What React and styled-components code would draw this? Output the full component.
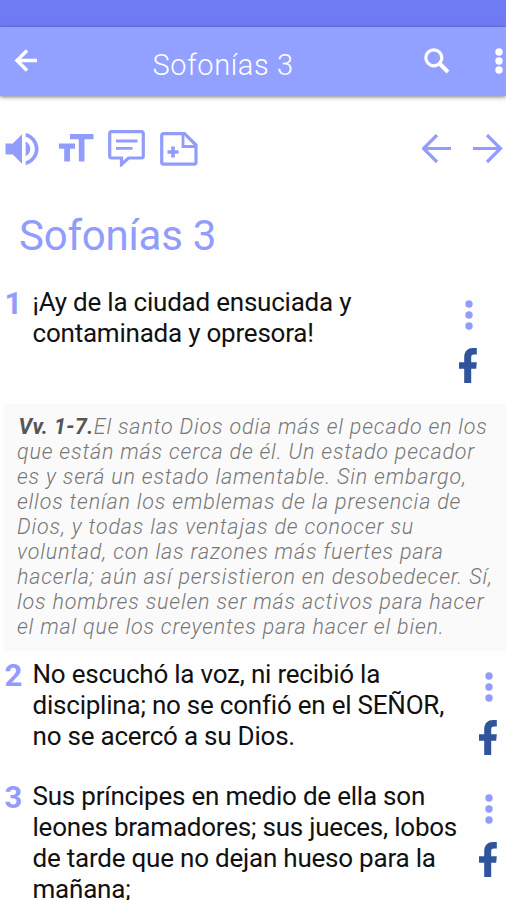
import React from "react";
import styled, { createGlobalStyle } from "styled-components";

const verses = [
  {
    number: 1,
    height: "117px",
    inset: "20px",
    lines: ["¡Ay de la ciudad ensuciada y", "contaminada y opresora!"]
  },
  {
    number: 2,
    height: "122px",
    inset: "0",
    lines: [
      "No escuchó la voz, ni recibió la",
      "disciplina; no se confió en el SEÑOR,",
      "no se acercó a su Dios."
    ]
  },
  {
    number: 3,
    height: "124px",
    inset: "0",
    lines: [
      "Sus príncipes en medio de ella son",
      "leones bramadores; sus jueces, lobos",
      "de tarde que no dejan hueso para la",
      "mañana;"
    ]
  }
];

const commentary = [
  "que están más cerca de él. Un estado pecador",
  "es y será un estado lamentable. Sin embargo,",
  "ellos tenían los emblemas de la presencia de",
  "Dios, y todas las ventajas de conocer su",
  "voluntad, con las razones más fuertes para",
  "hacerla; aún así persistieron en desobedecer. Sí,",
  "los hombres suelen ser más activos para hacer",
  "el mal que los creyentes para hacer el bien."
];

const BackIcon = () => (
  <svg width="24" height="24" viewBox="0 0 24 24" fill="none" stroke="#fff" strokeWidth="3.5">
    <path d="M23 11.5H3.5M13 1.5L3 11.5L13 21.5" />
  </svg>
);

const SearchIcon = () => (
  <svg width="26" height="26" viewBox="0 0 26 26" fill="none" stroke="#fff" strokeWidth="3.2">
    <circle cx="9.8" cy="9.8" r="8" />
    <path d="M15.5 15.5L24 24" strokeWidth="4" />
  </svg>
);

const Dots = ({ color, gap }) => (
  <svg width="8" height="30" viewBox="0 0 8 30" fill={color}>
    <circle cx="4" cy={15 - gap} r="3.7" />
    <circle cx="4" cy="15" r="3.7" />
    <circle cx="4" cy={15 + gap} r="3.7" />
  </svg>
);

const FacebookIcon = () => (
  <svg width="20" height="35" viewBox="0 0 20 35" fill="#30549b">
    <path d="M5.2 35V20.8H0V14.2H5.2V9.4C5.2 3.4 8.6 0 14 0H17.8V6.6H15C12.9 6.6 12.2 7.4 12.2 9.6V14.2H17.8L17.2 20.8H12.2V35Z" />
  </svg>
);

const SpeakerIcon = () => (
  <svg width="44" height="44" viewBox="0 0 24 24" fill="#929dfb">
    <path d="M3 9v6h4l5 5V4L7 9H3zm13.5 3c0-1.77-1.02-3.29-2.5-4.03v8.05c1.48-.73 2.5-2.25 2.5-4.02zM14 3.23v2.06c2.89.86 5 3.54 5 6.71s-2.11 5.85-5 6.71v2.06c4.01-.91 7-4.49 7-8.77s-2.99-7.86-7-8.77z" />
  </svg>
);

const TextSizeIcon = () => (
  <svg width="35" height="30" viewBox="0 0 35 30" fill="#929dfb">
    <path d="M11 0H34.5V5.3H25.5V27.5H19.8V5.3H11ZM0 9.5H16V14.8H11V27.5H5.2V14.8H0Z" />
  </svg>
);

const CommentIcon = () => (
  <svg width="37" height="37" viewBox="0 0 37 37" fill="none" stroke="#929dfb" strokeWidth="3.2">
    <path d="M3.6 1.7H33.4Q35.3 1.7 35.3 3.6V26Q35.3 28 33.4 28H20.5L13.5 34.5V28H3.6Q1.7 28 1.7 26V3.6Q1.7 1.7 3.6 1.7Z" />
    <path d="M8 11H29.5M8 18.3H24.5" strokeWidth="2.8" />
  </svg>
);

const NoteIcon = () => (
  <svg width="38" height="34" viewBox="0 0 38 34" fill="none" stroke="#929dfb" strokeWidth="3.2">
    <path d="M3.6 1.6H24.5L36 13V30.2Q36 32.2 34 32.2H3.6Q1.7 32.2 1.7 30.2V3.6Q1.7 1.6 3.6 1.6Z" />
    <path d="M23 2V14.5H36" strokeWidth="2.8" />
    <path d="M7.5 20H18.5M13 14.5V25.5" strokeWidth="3.6" />
  </svg>
);

const ArrowIcon = ({ flip }) => (
  <svg width="30" height="30" viewBox="0 0 30 30" fill="none" stroke="#929dfb" strokeWidth="3.2">
    <path d={flip ? "M0 14.5H27M14 1L27.5 14.5L14 28" : "M29 14.5H2M15 1L1.5 14.5L15 28"} />
  </svg>
);

const App = () => {
  return (
    <Screen>
      <GlobalStyle />
      <StatusBar />
      <AppBar>
        <BackIcon />
        <BarTitle>Sofonías 3</BarTitle>
        <SearchIcon />
        <MenuSlot>
          <Dots color="#fff" gap={9} />
        </MenuSlot>
      </AppBar>
      <Toolbar>
        <Tools>
          <SpeakerIcon />
          <TextSizeIcon />
          <CommentIcon />
          <NoteIcon />
        </Tools>
        <Pager>
          <ArrowIcon />
          <ArrowIcon flip />
        </Pager>
      </Toolbar>
      <Heading>Sofonías 3</Heading>
      {verses.map(verse => (
        <React.Fragment key={verse.number}>
          <Verse $height={verse.height}>
            <Number>{verse.number}</Number>
            <VerseText>
              {verse.lines.map(line => (
                <Line key={line}>{line}</Line>
              ))}
            </VerseText>
            <Actions $inset={verse.inset}>
              <Dots color="#929dfb" gap={11} />
              <FacebookIcon />
            </Actions>
          </Verse>
          {verse.number === 1 && (
            <Commentary>
              <Line>
                <Reference>Vv. 1-7.</Reference>El santo Dios odia más el pecado en los
              </Line>
              {commentary.map(line => (
                <Line key={line}>{line}</Line>
              ))}
            </Commentary>
          )}
        </React.Fragment>
      ))}
    </Screen>
  );
};

export default App;

const GlobalStyle = createGlobalStyle`
  * {
    box-sizing: border-box;
  }
  body {
    margin: 0;
    background-color: #fefefe;
    font-family: Roboto, sans-serif;
  }
  svg {
    display: block;
    flex-shrink: 0;
  }
`;

const Screen = styled.div`
  width: 506px;
  height: 900px;
  overflow: hidden;
  background-color: #fefefe;
`;

const StatusBar = styled.div`
  height: 27px;
  background-color: #6f7bf3;
`;

const AppBar = styled.header`
  display: flex;
  align-items: center;
  height: 69px;
  padding: 0 3.5px 2px 14px;
  background-color: #92a0ff;
  box-shadow: 0 1px 4px rgba(0, 0, 0, 0.5);
`;

const BarTitle = styled.h1`
  flex: 1;
  margin: 0;
  padding: 8px 0 0 114.5px;
  font-size: 29px;
  font-weight: 300;
  letter-spacing: 0.6px;
  color: #fff;
`;

const MenuSlot = styled.div`
  margin-left: 45px;
`;

const Toolbar = styled.div`
  display: flex;
  align-items: center;
  justify-content: space-between;
  height: 105px;
  padding: 0 3px 0 0;
`;

const Tools = styled.div`
  display: flex;
  align-items: center;
  gap: 14.6px;
`;

const Pager = styled.div`
  display: flex;
  gap: 21px;
`;

const Heading = styled.h2`
  margin: 0;
  padding: 10px 0 0 19px;
  height: 86px;
  font-size: 42px;
  font-weight: 400;
  line-height: 50px;
  letter-spacing: -0.25px;
  color: #929dfb;
`;

const Verse = styled.div`
  display: flex;
  height: ${props => props.$height};
  padding-right: 7px;
`;

const Number = styled.span`
  width: 32.5px;
  padding-left: 4.5px;
  font-size: 31px;
  font-weight: 700;
  line-height: 33px;
  color: #929dfb;
`;

const VerseText = styled.div`
  flex: 1;
  font-size: 26px;
  line-height: 31px;
  letter-spacing: -0.22px;
  color: #111;
`;

const Line = styled.div`
  white-space: nowrap;
`;

const Actions = styled.div`
  display: flex;
  flex-direction: column;
  align-items: center;
  gap: 18px;
  padding-top: 13px;
  margin-right: ${props => props.$inset};
`;

const Commentary = styled.div`
  height: 247px;
  margin: 0 0 8px 4px;
  padding: 10px 0 0 13px;
  background-color: #fafafa;
  font-size: 21.5px;
  font-style: italic;
  font-weight: 300;
  line-height: 25px;
  letter-spacing: 0.83px;
  color: #777;
`;

const Reference = styled.b`
  padding-left: 1.5px;
  font-weight: 700;
  letter-spacing: 0.4px;
  color: #555;
`;
